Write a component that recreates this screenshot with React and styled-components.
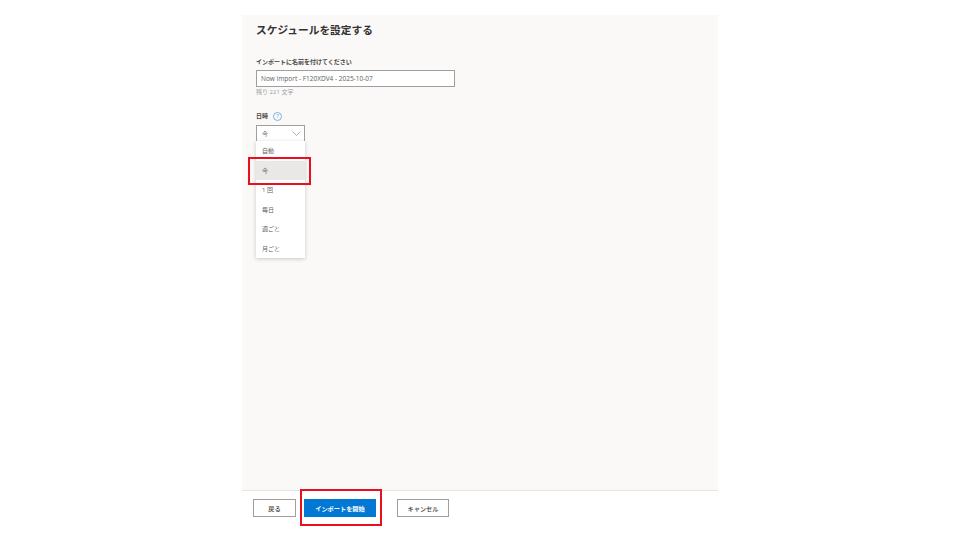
import styled, { createGlobalStyle } from 'styled-components'

const GlobalStyle = createGlobalStyle`
	html, body {
		margin: 0;
		padding: 0;
		background: #fff;
	}
	body {
		font-family: 'Open Sans', 'Noto Sans CJK JP', sans-serif;
		color: #323130;
	}
`

const options = ['自動', '今', '1 回', '毎日', '週ごと', '月ごと']

export default function App() {
	return (
		<Page>
			<GlobalStyle />
			<Wizard>
				<Content>
					<Title>スケジュールを設定する</Title>
					<FieldLabel>インポートに名前を付けてください</FieldLabel>
					<NameInput>Now Import - F120XDV4 - 2025-10-07</NameInput>
					<Hint>残り 221 文字</Hint>
					<DateLabel>
						日時
						<HelpIcon>?</HelpIcon>
					</DateLabel>
					<SelectWrap>
						<Select>
							今
							<svg width="9" height="5" viewBox="0 0 9 5" fill="none" stroke="#a19f9d" strokeWidth="0.8">
								<path d="M0.5 0.5 L4.5 4.5 L8.5 0.5" />
							</svg>
						</Select>
						<Menu>
							{options.map((o) => (
								<MenuItem key={o} $selected={o === '今'}>{o}</MenuItem>
							))}
							<MenuHighlight />
						</Menu>
					</SelectWrap>
				</Content>
				<Footer>
					<Button>戻る</Button>
					<PrimaryWrap>
						<PrimaryButton>インポートを開始</PrimaryButton>
						<FooterHighlight />
					</PrimaryWrap>
					<CancelButton>キャンセル</CancelButton>
				</Footer>
			</Wizard>
		</Page>
	)
}

const Page = styled.div`
	width: 960px;
	height: 540px;
	display: flex;
	justify-content: center;
	overflow: hidden;
`

const Wizard = styled.div`
	width: 476px;
	margin-top: 15px;
	height: 525px;
	display: flex;
	flex-direction: column;
`

const Content = styled.div`
	height: 476px;
	box-sizing: border-box;
	background: #faf9f8;
	padding: 7px 14px 0;
	border-bottom: 1px solid #e6e5e3;
`

const Title = styled.h1`
	margin: 0;
	font-size: 10.7px;
	line-height: 17px;
	font-weight: 700;
	color: #323130;
`

const FieldLabel = styled.div`
	margin-top: 18px;
	font-size: 6px;
	line-height: 10px;
	font-weight: 600;
	color: #484644;
`

const NameInput = styled.div`
	margin-top: 3px;
	width: 199px;
	height: 17px;
	box-sizing: border-box;
	background: #fff;
	border: 1px solid #a19f9d;
	padding: 0 4px;
	font-size: 6.5px;
	line-height: 15px;
	color: #605e5c;
`

const Hint = styled.div`
	margin-top: 1px;
	font-size: 6px;
	line-height: 9px;
	color: #a19f9d;
`

const DateLabel = styled.div`
	margin-top: 14px;
	display: flex;
	align-items: center;
	gap: 5px;
	font-size: 6px;
	line-height: 10px;
	font-weight: 600;
	color: #484644;
`

const HelpIcon = styled.span`
	width: 7px;
	height: 7px;
	border: 1px solid #7ab4e0;
	border-radius: 50%;
	display: flex;
	align-items: center;
	justify-content: center;
	font-size: 5px;
	font-weight: 400;
	color: #3b94d9;
`

const SelectWrap = styled.div`
	position: relative;
	margin-top: 4px;
	width: 49px;
`

const Select = styled.div`
	height: 17px;
	box-sizing: border-box;
	background: #fff;
	border: 1px solid #a19f9d;
	padding: 0 3px 0 5px;
	display: flex;
	align-items: center;
	justify-content: space-between;
	font-size: 6px;
	color: #605e5c;
`

const Menu = styled.div`
	position: absolute;
	top: 16px;
	left: 0;
	width: 49px;
	height: 117px;
	background: #fff;
	box-shadow: 0 1px 4px rgba(0, 0, 0, 0.2);
	display: flex;
	flex-direction: column;
`

const MenuItem = styled.div`
	height: 19.5px;
	flex: none;
	padding-left: 6px;
	display: flex;
	align-items: center;
	font-size: 6px;
	color: #605e5c;
	background: ${(p) => (p.$selected ? '#e9e8e6' : 'transparent')};
`

const MenuHighlight = styled.div`
	position: absolute;
	top: 16px;
	left: -8px;
	width: 63px;
	height: 28px;
	border: 2px solid #e8101c;
	box-sizing: border-box;
`

const Footer = styled.div`
	flex: 1;
	display: flex;
	align-items: flex-start;
	padding: 8px 0 0 11px;
`

const Button = styled.div`
	width: 43px;
	height: 18px;
	box-sizing: border-box;
	border: 1px solid #a19f9d;
	background: #fff;
	display: flex;
	align-items: center;
	justify-content: center;
	font-size: 6.2px;
	font-weight: 500;
	color: #3b3a39;
`

const PrimaryWrap = styled.div`
	position: relative;
	margin-left: 8px;
`

const PrimaryButton = styled(Button)`
	width: 72px;
	border: none;
	background: #0078d4;
	color: #fff;
	font-weight: 600;
`

const FooterHighlight = styled.div`
	position: absolute;
	top: -10px;
	left: -4px;
	width: 82px;
	height: 37px;
	border: 2px solid #e8101c;
	box-sizing: border-box;
`

const CancelButton = styled(Button)`
	margin-left: 21px;
	width: 52px;
`
